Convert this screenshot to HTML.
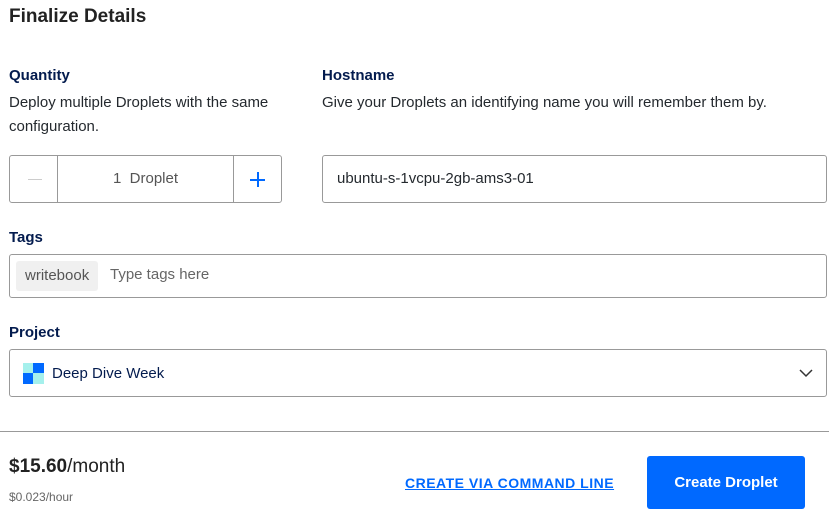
<!DOCTYPE html>
<html><head><style>
body{margin:0;width:829px;height:525px;background:#fff;font-family:"Liberation Sans",sans-serif;color:#031b4e;position:relative;overflow:hidden}
.a{position:absolute}
h1{position:absolute;left:9px;top:6px;margin:0;font-size:19px;font-weight:bold;color:#222}
.lbl{font-size:15px;font-weight:bold;color:#031b4e}
.t{font-size:15px;color:#24292e;line-height:24px}
.box{position:absolute;border:1px solid #999;border-radius:3px;box-sizing:border-box}
</style></head><body>
<h1>Finalize Details</h1>
<div class="a lbl" style="left:9px;top:67px">Quantity</div>
<div class="a t" style="left:9px;top:91px;width:260px">Deploy multiple Droplets with the same configuration.</div>
<div class="a lbl" style="left:322px;top:67px">Hostname</div>
<div class="a t" style="left:322px;top:91px">Give your Droplets an identifying name you will remember them by.</div>
<div class="box" style="left:9px;top:155px;width:273px;height:48px">
 <div class="a" style="left:47px;top:0;width:1px;height:47px;background:#999"></div>
 <div class="a" style="left:223px;top:0;width:1px;height:47px;background:#999"></div>
 <div class="a" style="left:18px;top:23px;width:14px;height:1px;background:#ccc"></div>
 <div class="a t" style="left:48px;top:11px;width:175px;text-align:center;color:#555">1&nbsp; Droplet</div>
 <div class="a" style="left:240px;top:23px;width:15px;height:2px;background:#0069ff"></div>
 <div class="a" style="left:246.5px;top:16px;width:2px;height:15px;background:#0069ff"></div>
</div>
<div class="box" style="left:322px;top:155px;width:505px;height:48px"><div class="a t" style="left:14px;top:11px">ubuntu-s-1vcpu-2gb-ams3-01</div></div>
<div class="a lbl" style="left:9px;top:229px">Tags</div>
<div class="box" style="left:9px;top:254px;width:818px;height:44px">
 <div class="a t" style="left:6px;top:6px;height:30px;line-height:30px;padding:0 9px;background:#f0f0f0;border-radius:3px;color:#555">writebook</div>
 <div class="a t" style="left:100px;top:8px;color:#666">Type tags here</div>
</div>
<div class="a lbl" style="left:9px;top:324px">Project</div>
<div class="box" style="left:9px;top:349px;width:818px;height:48px">
 <svg class="a" style="left:13px;top:13px" width="21" height="21"><rect width="21" height="21" fill="#a5f0ec"/><rect x="10" width="11" height="10" fill="#0069ff"/><rect y="10" width="10" height="11" fill="#0069ff"/></svg>
 <div class="a t" style="left:42px;top:12px;color:#031b4e">Deep Dive Week</div>
 <svg class="a" style="left:789px;top:19px" width="14" height="9"><path d="M1 1l6 6 6-6" stroke="#333" stroke-width="1.5" fill="none"/></svg>
</div>
<div class="a" style="left:0;top:431px;width:829px;height:1px;background:#999"></div>
<div class="a" style="left:9px;top:456px;font-size:19px;font-weight:bold;color:#222">$15.60<span style="font-weight:normal">/month</span></div>
<div class="a" style="left:9px;top:490px;font-size:12px;color:#666">$0.023/hour</div>
<div class="a" style="left:405px;top:475px;font-size:14px;font-weight:bold;color:#0069ff;text-decoration:underline;letter-spacing:.5px">CREATE VIA COMMAND LINE</div>
<div class="a" style="left:647px;top:456px;width:158px;height:53px;background:#0069ff;border-radius:3px;color:#fff;font-size:15px;font-weight:bold;text-align:center;line-height:53px">Create Droplet</div>
</body></html>
